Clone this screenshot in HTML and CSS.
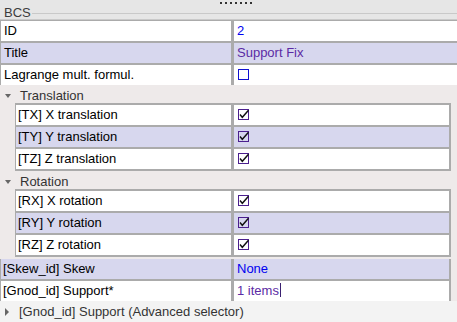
FILE: index.html
```html
<!DOCTYPE html>
<html lang="en">
<head>
  <meta charset="UTF-8" />
  <title>BCS</title>
  <link rel="stylesheet" href="styles.css">
</head>
<body>
  <div class="panel">
    <div class="group-title">
      <span>BCS</span>
      <div class="title-line"></div>
      <div class="grip"></div>
    </div>

    <div class="props top">
      <div class="row">
        <div class="label">ID</div>
        <div class="value blue">2</div>
      </div>
      <div class="row alt">
        <div class="label">Title</div>
        <div class="value purple">Support Fix</div>
      </div>
      <div class="row">
        <div class="label">Lagrange mult. formul.</div>
        <div class="value"><span class="check off"></span></div>
      </div>
    </div>

    <div class="section-head"><span class="tri down"></span>Translation</div>
    <div class="props sub">
      <div class="row">
        <div class="label">[TX] X translation</div>
        <div class="value"><span class="check on"><svg width="11" height="11" viewBox="0 0 11 11"><path d="M2 5.5 L4.3 8.3 L10.5 1.2" /></svg></span></div>
      </div>
      <div class="row alt">
        <div class="label">[TY] Y translation</div>
        <div class="value"><span class="check on"><svg width="11" height="11" viewBox="0 0 11 11"><path d="M2 5.5 L4.3 8.3 L10.5 1.2" /></svg></span></div>
      </div>
      <div class="row">
        <div class="label">[TZ] Z translation</div>
        <div class="value"><span class="check on"><svg width="11" height="11" viewBox="0 0 11 11"><path d="M2 5.5 L4.3 8.3 L10.5 1.2" /></svg></span></div>
      </div>
    </div>

    <div class="section-head"><span class="tri down"></span>Rotation</div>
    <div class="props sub">
      <div class="row">
        <div class="label">[RX] X rotation</div>
        <div class="value"><span class="check on"><svg width="11" height="11" viewBox="0 0 11 11"><path d="M2 5.5 L4.3 8.3 L10.5 1.2" /></svg></span></div>
      </div>
      <div class="row alt">
        <div class="label">[RY] Y rotation</div>
        <div class="value"><span class="check on"><svg width="11" height="11" viewBox="0 0 11 11"><path d="M2 5.5 L4.3 8.3 L10.5 1.2" /></svg></span></div>
      </div>
      <div class="row">
        <div class="label">[RZ] Z rotation</div>
        <div class="value"><span class="check on"><svg width="11" height="11" viewBox="0 0 11 11"><path d="M2 5.5 L4.3 8.3 L10.5 1.2" /></svg></span></div>
      </div>
    </div>

    <div class="props bottom">
      <div class="row alt">
        <div class="label">[Skew_id] Skew</div>
        <div class="value blue">None</div>
      </div>
      <div class="row">
        <div class="label">[Gnod_id] Support*</div>
        <div class="value purple">1 items<span class="caret"></span></div>
      </div>
    </div>

    <div class="advanced"><span class="tri right"></span>[Gnod_id] Support (Advanced selector)</div>
  </div>
</body>
</html>
```

FILE: styles.css
```css
body {
  margin: 0;
  padding: 0;
  width: 457px;
  height: 322px;
  overflow: hidden;
  background: #f3f3f3;
  font-family: "Liberation Sans", Arial, sans-serif;
  font-size: 13px;
  color: #000;
}

.panel {
  display: flex;
  flex-direction: column;
  background: #eeeaea;
}

/* group box title with the splitter grip */
.group-title {
  position: relative;
  display: flex;
  height: 19px;
  background: #e6e6e6;
  color: #3c3c3c;
}

.group-title span {
  padding: 6px 0 0 4px;
  line-height: 13px;
}

.title-line {
  flex: 1;
  height: 1px;
  margin: 13px 0 0 1px;
  background: #c9c9c9;
}

.grip {
  position: absolute;
  top: 2px;
  left: 220px;
  width: 32px;
  height: 2px;
  background: repeating-linear-gradient(to right, #333 0 2px, transparent 2px 5px);
}

/* property grids */
.props {
  display: flex;
  flex-direction: column;
  gap: 2px;
  background: #ababab;
}

.row {
  display: grid;
  gap: 3px;
  height: 20px;
  line-height: 20px;
}

.label,
.value {
  background: #fff;
  white-space: nowrap;
  overflow: hidden;
}

.row.alt .label,
.row.alt .value {
  background: #d7d7ee;
}

.top {
  padding: 1px 0 0 1px;
  border-top: 1px solid #c9c9c9;
}

.top .row {
  grid-template-columns: 230px 1fr;
}

.top .label {
  padding-left: 3px;
}

.sub {
  margin: 0 6px 0 15px;
  padding: 2px 2px 2px 1px;
}

.sub .row {
  grid-template-columns: 215px 1fr;
}

.sub .label {
  padding-left: 2px;
}

.bottom {
  margin: 2px 6px 0 0;
  padding: 0 2px 0 1px;
}

.bottom .row {
  grid-template-columns: 230px 1fr;
}

.bottom .label {
  padding-left: 2px;
}

.value {
  padding-left: 3px;
}

.blue {
  color: #0000f0;
}

.purple {
  color: #5b2ba4;
}

.caret {
  display: inline-block;
  width: 1px;
  height: 14px;
  margin-left: 1px;
  vertical-align: -2px;
  background: #3a2070;
}

/* checkboxes */
.check {
  display: inline-block;
  box-sizing: border-box;
  width: 11px;
  height: 11px;
  margin: 4px 0 0 1px;
  vertical-align: top;
  position: relative;
}

.check.off {
  border: 1px solid #1010d0;
}

.check.on {
  border: 1px solid #4b1f8e;
}

.check svg {
  position: absolute;
  left: -1px;
  top: -1px;
  overflow: visible;
}

.check path {
  fill: none;
  stroke: #111;
  stroke-width: 1.4;
}

/* section headers */
.section-head {
  box-sizing: border-box;
  height: 18px;
  padding: 3px 0 0 5px;
  line-height: 15px;
  color: #333;
  display: flex;
  align-items: center;
}

.tri {
  display: inline-block;
  width: 0;
  height: 0;
  margin-right: 9px;
}

.tri.down {
  border-left: 3px solid transparent;
  border-right: 3px solid transparent;
  border-top: 4px solid #666;
}

.tri.right {
  border-top: 4px solid transparent;
  border-bottom: 4px solid transparent;
  border-left: 4px solid #666;
  margin-right: 10px;
}

.advanced {
  display: flex;
  align-items: center;
  height: 22px;
  padding-left: 5px;
  background: #f3f3f3;
  color: #333;
  line-height: 18px;
}
```
